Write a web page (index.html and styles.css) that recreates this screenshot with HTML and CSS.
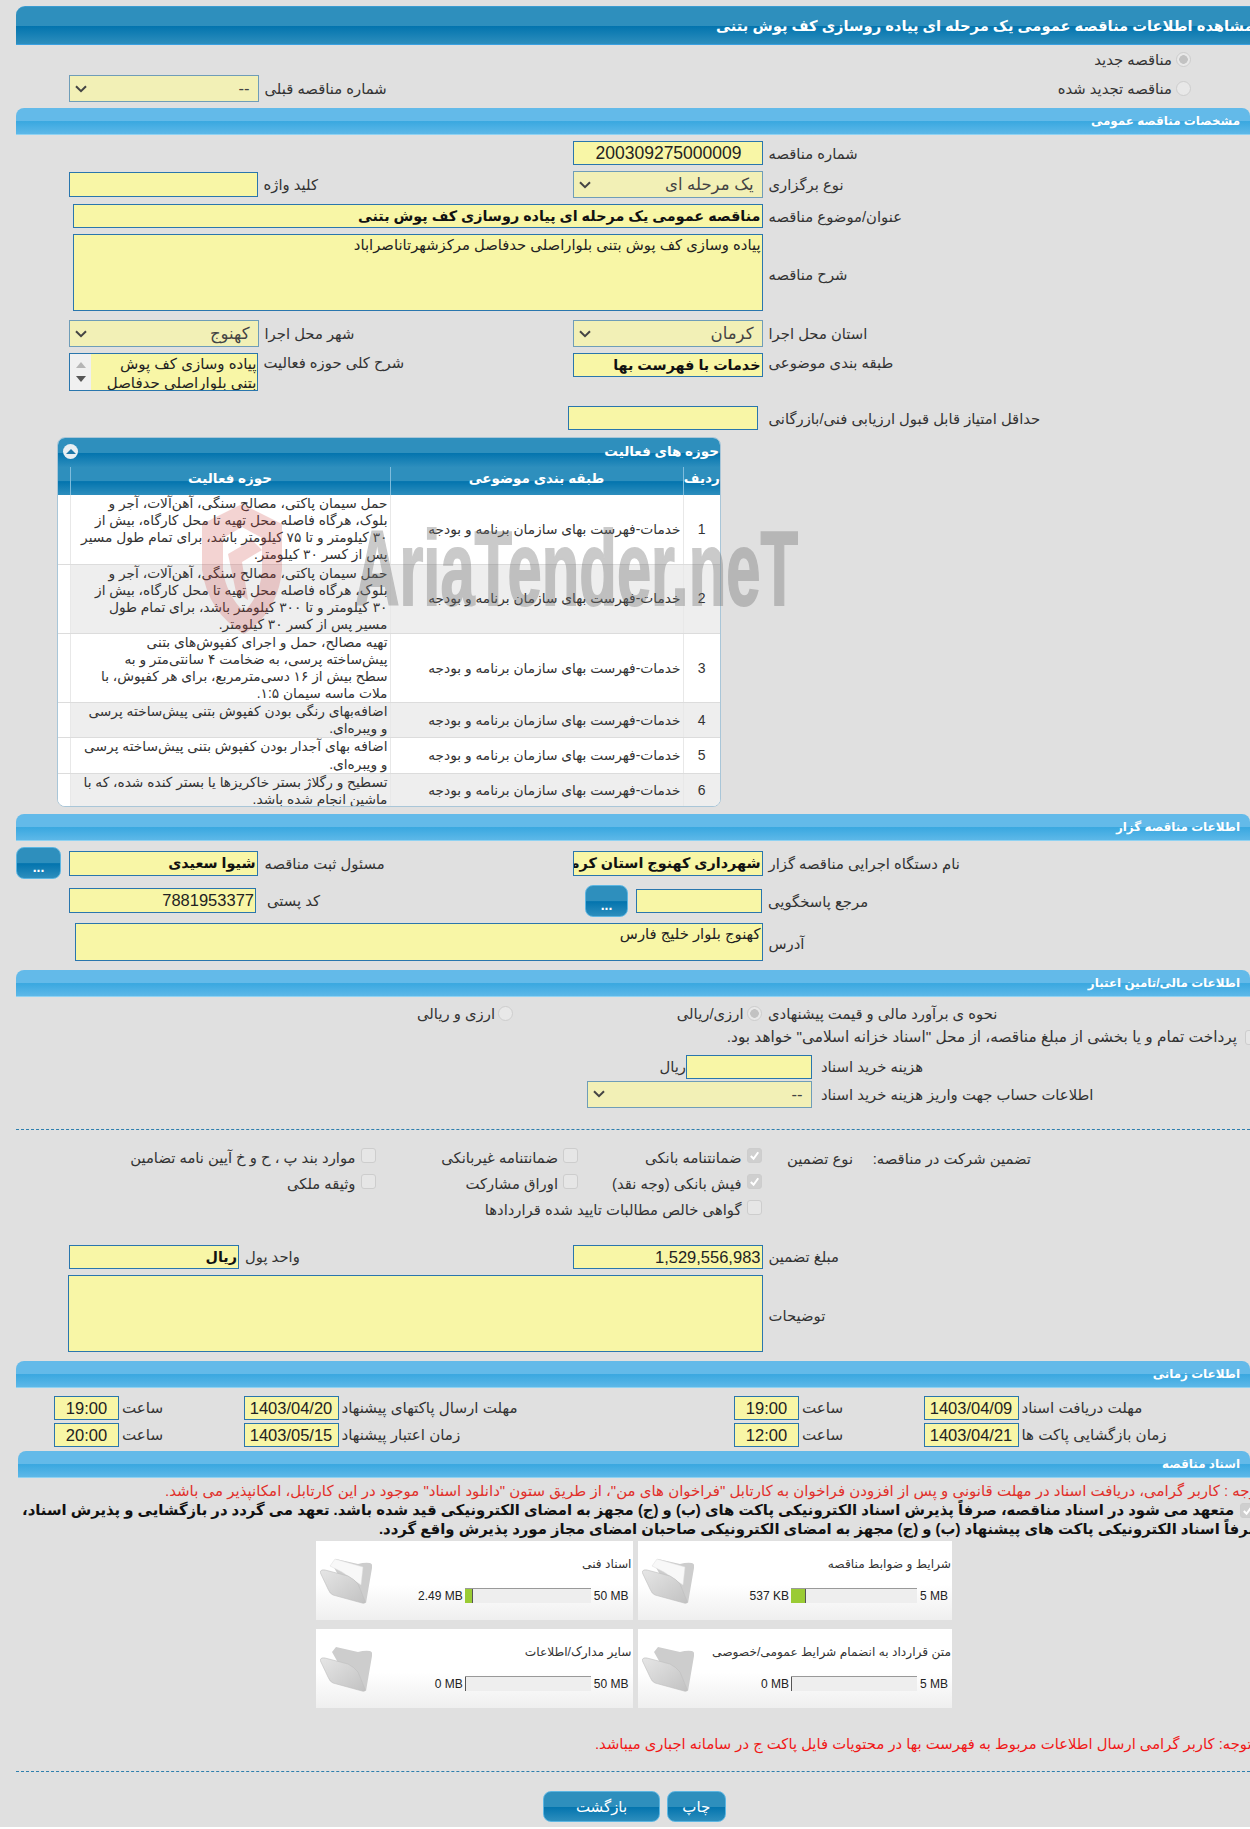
FILE: index.html
```html
<!DOCTYPE html>
<html lang="fa">
<head>
<meta charset="utf-8">
<title>مشاهده اطلاعات مناقصه</title>
<link rel="stylesheet" href="styles.css">
</head>
<body>
<svg class="defs" aria-hidden="true">
  <defs>
    <linearGradient id="fg" x1="0" y1="0" x2="1" y2="1"><stop offset="0" stop-color="#e6e6e6"/><stop offset="1" stop-color="#c2c2c2"/></linearGradient>
    <symbol id="folder-back" viewBox="0 0 52 46">
      <path d="M12 6 L16 1 L38 6 Q45 4 50 5 Q53 6 52 10 L46 45 L30 38 Z" fill="#cdcdcd"/>
    </symbol>
    <symbol id="folder-front" viewBox="0 0 52 46">
      <path d="M0 14 Q1 11 5 12 L28 18 Q34 21 38 26 L45 43 Q46 46 42 45 L13 37 Q10 36 8 31 Z" fill="url(#fg)" stroke="#bdbdbd" stroke-width=".6"/>
    </symbol>
    <symbol id="folder-paper" viewBox="0 0 52 46">
      <path d="M10 8 L15 1 L43 9 L41 27 L22 14 Z" fill="#f8f8f8" stroke="#dedede" stroke-width=".5"/>
    </symbol>
    <symbol id="chev" viewBox="0 0 12 8"><path d="M1 1.2 L6 6.2 L11 1.2" fill="none" stroke="#444" stroke-width="2"/></symbol>
    <symbol id="tick" viewBox="0 0 14 14"><path d="M3 7.5 L6 10.5 L11 3.5" fill="none" stroke="#fff" stroke-width="2.2"/></symbol>
  </defs>
</svg>

<div class="page">
  <h1 class="main-title"><span dir="rtl">مشاهده اطلاعات مناقصه عمومی یک مرحله ای پیاده روسازی کف پوش بتنی</span></h1>

  <div class="intro">
    <div class="field prev">
      <div class="sel w189"><svg class="chev"><use href="#chev"/></svg><span>--</span></div>
      <span class="lab">شماره مناقصه قبلی</span>
    </div>
    <div class="radios">
      <div class="opt"><span class="lab">مناقصه جدید</span><span class="radio on"></span></div>
      <div class="opt"><span class="lab">مناقصه تجدید شده</span><span class="radio"></span></div>
    </div>
  </div>

  <h2 class="sec"><span dir="rtl">مشخصات مناقصه عمومی</span></h2>

  <div class="form">
    <div class="row">
      <div></div>
      <div class="field"><div class="inp w189 num big">200309275000009</div><span class="lab">شماره مناقصه</span></div>
    </div>
    <div class="row center">
      <div class="field"><div class="inp w188 h25"></div><span class="lab">کلید واژه</span></div>
      <div class="field"><div class="sel w189"><svg class="chev"><use href="#chev"/></svg><span>یک مرحله ای</span></div><span class="lab">نوع برگزاری</span></div>
    </div>
    <div class="row">
      <div class="field wide"><div class="inp w689 strong">مناقصه عمومی یک مرحله ای پیاده روسازی کف پوش بتنی</div><span class="lab">عنوان/موضوع مناقصه</span></div>
    </div>
    <div class="row">
      <div class="field wide"><div class="inp w689 area">پیاده وسازی کف پوش بتنی بلواراصلی حدفاصل مرکزشهرتاناصراباد</div><span class="lab">شرح مناقصه</span></div>
    </div>
    <div class="row gap-9">
      <div class="field"><div class="sel w189"><svg class="chev"><use href="#chev"/></svg><span>کهنوج</span></div><span class="lab">شهر محل اجرا</span></div>
      <div class="field"><div class="sel w189"><svg class="chev"><use href="#chev"/></svg><span>کرمان</span></div><span class="lab">استان محل اجرا</span></div>
    </div>
    <div class="row">
      <div class="field top">
        <div class="list w188">
          <div class="scroll"><i class="up"></i><i class="down"></i></div>
          <div class="list-text">پیاده وسازی کف پوش<br>بتنی بلواراصلی حدفاصل</div>
        </div>
        <span class="lab">شرح کلی حوزه فعالیت</span>
      </div>
      <div class="field top"><div class="inp w189 strong">خدمات با فهرست بها</div><span class="lab">طبقه بندی موضوعی</span></div>
    </div>
    <div class="row gap-15">
      <div></div>
      <div class="field score"><div class="inp w189"></div><span class="lab">حداقل امتیاز قابل قبول ارزیابی فنی/بازرگانی</span></div>
    </div>

    <section class="card">
      <div class="card-title">
        <span class="collapse"><i></i></span>
        <span dir="rtl">حوزه های فعالیت</span>
      </div>
      <table class="grid" dir="rtl">
        <thead>
          <tr><th class="c-n">ردیف</th><th class="c-c">طبقه بندی موضوعی</th><th class="c-a">حوزه فعالیت</th><th class="c-e"></th></tr>
        </thead>
        <tbody>
          <tr class="r4"><td class="c-n">1</td><td class="c-c">خدمات-فهرست بهای سازمان برنامه و بودجه</td><td class="c-a">حمل سیمان پاکتی، مصالح سنگی، آهن‌آلات، آجر و<br>بلوک، هرگاه فاصله محل تهیه تا محل کارگاه، بیش از<br>۳۰ کیلومتر و تا ۷۵ کیلومتر باشد، برای تمام طول مسیر<br>پس از کسر ۳۰ کیلومتر.</td><td class="c-e"></td></tr>
          <tr class="r4 alt"><td class="c-n">2</td><td class="c-c">خدمات-فهرست بهای سازمان برنامه و بودجه</td><td class="c-a">حمل سیمان پاکتی، مصالح سنگی، آهن‌آلات، آجر و<br>بلوک، هرگاه فاصله محل تهیه تا محل کارگاه، بیش از<br>۳۰ کیلومتر و تا ۳۰۰ کیلومتر باشد، برای تمام طول<br>مسیر پس از کسر ۳۰ کیلومتر.</td><td class="c-e"></td></tr>
          <tr class="r4"><td class="c-n">3</td><td class="c-c">خدمات-فهرست بهای سازمان برنامه و بودجه</td><td class="c-a">تهیه مصالح، حمل و اجرای کفپوش‌های بتنی<br>پیش‌ساخته پرسی، به ضخامت ۴ سانتی‌متر و به<br>سطح بیش از ۱۶ دسی‌مترمربع، برای هر کفپوش، با<br>ملات ماسه سیمان ۱:۵.</td><td class="c-e"></td></tr>
          <tr class="r2 alt"><td class="c-n">4</td><td class="c-c">خدمات-فهرست بهای سازمان برنامه و بودجه</td><td class="c-a">اضافه‌بهای رنگی بودن کفپوش بتنی پیش‌ساخته پرسی<br>و ویبره‌ای.</td><td class="c-e"></td></tr>
          <tr class="r2"><td class="c-n">5</td><td class="c-c">خدمات-فهرست بهای سازمان برنامه و بودجه</td><td class="c-a">اضافه بهای آجدار بودن کفپوش بتنی پیش‌ساخته پرسی<br>و ویبره‌ای.</td><td class="c-e"></td></tr>
          <tr class="r2 alt"><td class="c-n">6</td><td class="c-c">خدمات-فهرست بهای سازمان برنامه و بودجه</td><td class="c-a">تسطیح و رگلاژ بستر خاکریزها یا بستر کنده شده، که با<br>ماشین انجام شده باشد.</td><td class="c-e"></td></tr>
        </tbody>
      </table>
    </section>
  </div>

  <h2 class="sec"><span dir="rtl">اطلاعات مناقصه گزار</span></h2>

  <div class="form">
    <div class="row three">
      <button class="btn dots" type="button">...</button>
      <div class="field"><div class="inp w188 h25 strong">شیوا سعیدی</div><span class="lab gap-lab">مسئول ثبت مناقصه</span></div>
      <div class="field"><div class="inp w189 h25 strong">شهرداری کهنوج استان کرمان</div><span class="lab">نام دستگاه اجرایی مناقصه گزار</span></div>
    </div>
    <div class="row top-align">
      <div class="field postal"><div class="inp w186 h25 num">7881953377</div><span class="lab">کد پستی</span></div>
      <div class="field ref">
        <button class="btn dots" type="button">...</button>
        <div class="inp w126"></div>
        <span class="lab">مرجع پاسخگویی</span>
      </div>
    </div>
    <div class="row">
      <div class="field wide addr"><div class="inp w688 addr-box">کهنوج بلوار خلیج فارس</div><span class="lab">آدرس</span></div>
    </div>
  </div>

  <h2 class="sec gap-sec"><span dir="rtl">اطلاعات مالی/تامین اعتبار</span></h2>

  <div class="finance">
    <div class="est">
      <div class="opt"><span class="lab">ارزی و ریالی</span><span class="radio"></span></div>
      <div class="opt"><span class="lab">ارزی/ریالی</span><span class="radio on"></span></div>
      <span class="lab">نحوه ی برآورد مالی و قیمت پیشنهادی</span>
    </div>
    <div class="treasury">
      <span class="lab" dir="rtl">پرداخت تمام و یا بخشی از مبلغ مناقصه، از محل "اسناد خزانه اسلامی" خواهد بود.</span>
      <span class="cb"></span>
    </div>
    <div class="fee">
      <span class="lab unit">ریال</span>
      <div class="inp w126"></div>
      <span class="lab">هزینه خرید اسناد</span>
    </div>
    <div class="bank">
      <div class="sel w224"><svg class="chev"><use href="#chev"/></svg><span>--</span></div>
      <span class="lab">اطلاعات حساب جهت واریز هزینه خرید اسناد</span>
    </div>
  </div>

  <div class="dash first-dash"></div>

  <div class="guarantee" dir="rtl">
    <span class="lab">تضمین شرکت در مناقصه:</span>
    <span class="lab">نوع تضمین</span>
    <div class="chk"><span class="cb on"><svg><use href="#tick"/></svg></span><span class="lab">ضمانتنامه بانکی</span></div>
    <div class="chk"><span class="cb"></span><span class="lab">ضمانتنامه غیربانکی</span></div>
    <div class="chk"><span class="cb"></span><span class="lab">موارد بند پ ، ح و خ آیین نامه تضامین</span></div>
    <div class="chk c3"><span class="cb on"><svg><use href="#tick"/></svg></span><span class="lab">فیش بانکی (وجه نقد)</span></div>
    <div class="chk"><span class="cb"></span><span class="lab">اوراق مشارکت</span></div>
    <div class="chk"><span class="cb"></span><span class="lab">وثیقه ملکی</span></div>
    <div class="chk c3 wide-chk"><span class="cb"></span><span class="lab">گواهی خالص مطالبات تایید شده قراردادها</span></div>
  </div>

  <div class="form amount">
    <div class="row">
      <div class="field"><div class="inp w170 strong">ریال</div><span class="lab">واحد پول</span></div>
      <div class="field"><div class="inp w189 num">1,529,556,983</div><span class="lab">مبلغ تضمین</span></div>
    </div>
    <div class="row">
      <div class="field desc"><div class="inp w694 area"></div><span class="lab">توضیحات</span></div>
    </div>
  </div>

  <h2 class="sec gap-sec"><span dir="rtl">اطلاعات زمانی</span></h2>

  <div class="dates">
    <div class="field"><div class="inp time">19:00</div><span class="lab">ساعت</span></div>
    <div class="field"><div class="inp date">1403/04/20</div><span class="lab">مهلت ارسال پاکتهای پیشنهاد</span></div>
    <div class="field"><div class="inp time">19:00</div><span class="lab">ساعت</span></div>
    <div class="field"><div class="inp date">1403/04/09</div><span class="lab">مهلت دریافت اسناد</span></div>
    <div class="field"><div class="inp time">20:00</div><span class="lab">ساعت</span></div>
    <div class="field"><div class="inp date">1403/05/15</div><span class="lab">زمان اعتبار پیشنهاد</span></div>
    <div class="field"><div class="inp time">12:00</div><span class="lab">ساعت</span></div>
    <div class="field"><div class="inp date">1403/04/21</div><span class="lab">زمان بازگشایی پاکت ها</span></div>
  </div>

  <h2 class="sec docs-sec"><span dir="rtl">اسناد مناقصه</span></h2>

  <p class="note red-1"><span dir="rtl">توجه : کاربر گرامی، دریافت اسناد در مهلت قانونی و پس از افزودن فراخوان به کارتابل "فراخوان های من"، از طریق ستون "دانلود اسناد" موجود در این کارتابل، امکانپذیر می باشد.</span></p>
  <div class="pledge">
    <span dir="rtl">متعهد می شود در اسناد مناقصه، صرفاً پذیرش اسناد الکترونیکی پاکت های (ب) و (ج) مجهز به امضای الکترونیکی قید شده باشد. تعهد می گردد در بازگشایی و پذیرش اسناد،</span>
    <span class="cb on"><svg><use href="#tick"/></svg></span>
  </div>
  <p class="note pledge-2"><span dir="rtl">صرفاً اسناد الکترونیکی پاکت های پیشنهاد (ب) و (ج) مجهز به امضای الکترونیکی صاحبان امضای مجاز مورد پذیرش واقع گردد.</span></p>

  <div class="files">
    <div class="file">
      <svg class="folder"><use href="#folder-back"/><use href="#folder-paper"/><use href="#folder-front"/></svg>
      <div class="file-body">
        <div class="file-title" dir="rtl">اسناد فنی</div>
        <div class="meter"><span class="val">2.49 MB</span><div class="bar"><i class="fill f-7"></i></div><span class="max">50 MB</span></div>
      </div>
    </div>
    <div class="file">
      <svg class="folder"><use href="#folder-back"/><use href="#folder-paper"/><use href="#folder-front"/></svg>
      <div class="file-body">
        <div class="file-title" dir="rtl">شرایط و ضوابط مناقصه</div>
        <div class="meter"><span class="val">537 KB</span><div class="bar"><i class="fill f-14"></i></div><span class="max">5 MB</span></div>
      </div>
    </div>
    <div class="file">
      <svg class="folder"><use href="#folder-back"/><use href="#folder-front"/></svg>
      <div class="file-body">
        <div class="file-title" dir="rtl">سایر مدارک/اطلاعات</div>
        <div class="meter"><span class="val">0 MB</span><div class="bar"><i class="fill f-0"></i></div><span class="max">50 MB</span></div>
      </div>
    </div>
    <div class="file">
      <svg class="folder"><use href="#folder-back"/><use href="#folder-front"/></svg>
      <div class="file-body">
        <div class="file-title" dir="rtl">متن قرارداد به انضمام شرایط عمومی/خصوصی</div>
        <div class="meter"><span class="val">0 MB</span><div class="bar"><i class="fill f-0"></i></div><span class="max">5 MB</span></div>
      </div>
    </div>
  </div>

  <p class="note red-2"><span dir="rtl">توجه: کاربر گرامی ارسال اطلاعات مربوط به فهرست بها در محتویات فایل پاکت ج در سامانه اجباری میباشد.</span></p>

  <div class="dash last-dash"></div>

  <div class="actions">
    <button class="btn wide-btn" type="button">بازگشت</button>
    <button class="btn print-btn" type="button">چاپ</button>
  </div>

  <div class="watermark" aria-hidden="true">
    <svg class="wm-shield" viewBox="0 0 82 136"><path d="M2 24 L42 4 L82 24 L82 70 Q78 112 44 134 Q8 112 2 70 Z M23 38 L23 70 Q26 94 44 112 Q60 96 62 72 L62 38 L42 27 Z M28 54 L52 40 L62 50 L42 62 L48 100 L36 92 Z" fill="#cc3a36" fill-rule="evenodd"/></svg>
    <span class="wm-text">AriaTender.neT</span>
  </div>
</div>
</body>
</html>
```
FILE: styles.css
```css
* { box-sizing: border-box; }
html, body { margin: 0; padding: 0; background: #fff; }
body { font-family: "Liberation Sans", "DejaVu Sans", sans-serif; color: #333; }
.defs { position: absolute; width: 0; height: 0; }

.page {
  position: relative;
  width: 1250px;
  height: 1827px;
  padding: 6px 0 0 16px;
  overflow: hidden;
  background: #e0e0e0;
  font-size: 14.8px;
}

.main-title {
  height: 39px;
  margin: 0;
  padding: 0 0 0 700px;
  display: flex;
  align-items: center;
  border-radius: 9px 0 0 0;
  border-top: 1px solid #3b9bd0;
  border-bottom: 1px solid #3aa0e0;
  background: linear-gradient(#2e8fbd 0, #2e8fbd 50%, #0374ae 52%, #2d8ebd 100%);
  color: #fff;
  font-size: 14.7px;
  font-weight: bold;
  white-space: nowrap;
}

.sec {
  height: 27px;
  margin: 0;
  padding-right: 10px;
  display: flex;
  align-items: center;
  justify-content: flex-start;
  flex-direction: row-reverse;
  border-radius: 8px 8px 0 0;
  border-bottom: 1px solid #8fd2f2;
  background: linear-gradient(#63bae9 0, #63bae9 50%, #3aa8e0 52%, #5db8e8 100%);
  color: #fff;
  font-size: 11.9px;
  font-weight: bold;
  white-space: nowrap;
}
.gap-sec { margin-top: 9px; }
.docs-sec { margin-top: 4px; margin-left: 2px; }

.intro {
  height: 63px;
  padding: 0 59px 0 53px;
  display: flex;
  justify-content: space-between;
}
.prev { margin-top: 30px; align-self: flex-start; }
.radios { display: flex; flex-direction: column; }
.opt { height: 29px; display: flex; align-items: center; justify-content: flex-end; gap: 4px; }
.lab { white-space: nowrap; direction: rtl; color: #333; }

.radio {
  width: 15px;
  height: 15px;
  border: 1px solid #cdcdcd;
  border-radius: 50%;
  background: #e8e8e8;
  flex: none;
}
.radio.on { background: radial-gradient(circle, #c2c2c2 0 4px, #e8e8e8 4.6px); }

.cb {
  display: inline-block;
  width: 15px;
  height: 15px;
  border: 1px solid #cdcdcd;
  border-radius: 3px;
  background: #e6e6e6;
  flex: none;
}
.cb svg { display: block; width: 13px; height: 13px; }
.cb.on { background: #cfcfcf; }

.form { padding-top: 6px; display: flex; flex-direction: column; gap: 6px; }
.row {
  display: grid;
  grid-template-columns: 504px 1fr;
  padding-left: 53px;
  align-items: start;
}
.row.center { align-items: center; }
.gap-9 { margin-top: 3px; }
.gap-15 { margin-top: 9px; }
.three { grid-template-columns: 53px 504px 1fr; padding-left: 0; align-items: center; }
.top-align { align-items: start; }

.field { display: flex; align-items: center; gap: 6px; }
.field.top { align-items: flex-start; }
.field.top .lab { margin-top: 1px; }
.wide { grid-column: 1 / -1; margin-left: 4px; }
.postal { margin-top: 3px; gap: 11px; }
.ref { margin-left: 12px; }
.score { margin-left: -5px; gap: 11px; }
.gap-lab { margin-left: 1px; }
.addr { margin-left: 5.5px; }
.desc { grid-column: 1 / -1; margin-left: -1px; }
.area + .lab, .addr-box + .lab { margin-top: 4px; }

.inp {
  height: 24px;
  padding: 0 1px;
  border: 1px solid #2a76ad;
  background: #f8f6a6;
  color: #222;
  direction: rtl;
  text-align: right;
  line-height: 22px;
  white-space: nowrap;
  overflow: hidden;
  flex: none;
}
.h25 { height: 25px; }
.strong { font-size: 14.35px; font-weight: bold; color: #111; line-height: 23px; }
.num { font-size: 16.5px; direction: ltr; }
.big { font-size: 17.5px; padding-right: 20px; }
.area { height: 77px; white-space: normal; line-height: 18px; padding-top: 1px; }
.addr-box { height: 37.5px; white-space: normal; line-height: 18px; padding-top: 1px; }
.w126 { width: 126px; }
.w170 { width: 170px; }
.w186 { width: 187px; }
.w188 { width: 188.5px; }
.w189 { width: 189.5px; }
.w224 { width: 224.5px; }
.w688 { width: 688px; }
.w689 { width: 689.5px; }
.w694 { width: 694.5px; }

.sel {
  height: 27px;
  padding: 0 8px 0 5px;
  display: flex;
  align-items: center;
  justify-content: space-between;
  border: 1px solid #6f9db8;
  background: #f2f0b6;
  color: #444;
  flex: none;
  direction: ltr;
}
.sel span { direction: rtl; font-size: 16.5px; }
.chev { width: 12px; height: 8px; }

.list {
  height: 38px;
  display: flex;
  border: 1px solid #2a76ad;
  background: #f8f6a6;
  overflow: hidden;
  flex: none;
}
.scroll {
  width: 21px;
  display: flex;
  flex-direction: column;
  align-items: center;
  justify-content: space-around;
  padding: 4px 0;
  background: #f0f0f0;
  flex: none;
}
.up { border: 5px solid transparent; border-top: 0; border-bottom: 6px solid #b5b5b5; }
.down { border: 5px solid transparent; border-bottom: 0; border-top: 6px solid #555; }
.list-text { flex: 1; direction: rtl; text-align: right; font-size: 15px; line-height: 19px; white-space: nowrap; color: #222; }

.card {
  margin: 1px 0 7px 41px;
  width: 664px;
  height: 370px;
  background: #fff;
  border: 1px solid #a9c6d8;
  border-radius: 8px;
  overflow: hidden;
}
.card-title {
  height: 29px;
  padding: 0 1px 3px 5px;
  display: flex;
  align-items: center;
  justify-content: space-between;
  background: linear-gradient(#2e8fbd 0, #2e8fbd 50%, #0374ae 52%, #2d8ebd 100%);
  color: #fff;
  font-size: 13.5px;
  font-weight: bold;
}
.collapse {
  width: 15px;
  height: 15px;
  display: flex;
  align-items: center;
  justify-content: center;
  border-radius: 50%;
  background: #e8eff3;
}
.collapse i { border: 5px solid transparent; border-top: 0; border-bottom: 5px solid #1f78a8; }

.grid { width: 100%; border-collapse: collapse; table-layout: fixed; }
.grid th {
  height: 28px;
  padding: 0 0 6px;
  border-left: 1px solid #7fbcdc;
  background: linear-gradient(#2e8fbd 0, #2e8fbd 50%, #0374ae 52%, #2d8ebd 100%);
  color: #fff;
  font-size: 13.5px;
  font-weight: bold;
}
.grid th.c-e { border-left: 0; }
.grid td { padding: 0 2px; border-bottom: 1px solid #dcdcdc; color: #333; font-size: 13.75px; line-height: 17.1px; }
.grid tr:last-child td { border-bottom: 0; }
.grid td.c-n { text-align: center; font-size: 14px; border-left: 1px solid #e8e8e8; }
.grid td.c-c { text-align: right; white-space: nowrap; border-left: 1px solid #e8e8e8; }
.grid td.c-a { text-align: right; white-space: nowrap; border-left: 1px solid #e8e8e8; }
.grid td.c-e { padding: 0; }
.c-n { width: 37px; }
.c-c { width: 293px; }
.c-a { width: 320px; }
.c-e { width: auto; }
.r4 td { height: 69px; }
.r2 td { height: 35px; }
.alt td { background: #eee; }
.alt td.c-e { background: #fff; }

.dots { padding-bottom: 0; }
.btn {
  width: 45px;
  height: 32px;
  padding: 8px 0 0;
  border: 1px solid #5db6e2;
  border-radius: 8px;
  background: linear-gradient(#2e8fbd 0, #2e8fbd 50%, #0374ae 52%, #2d8ebd 100%);
  color: #fff;
  font: bold 14px "Liberation Sans", "DejaVu Sans", sans-serif;
}
.ref .btn { width: 43px; flex: none; margin-right: 2px; }
.ref { gap: 6px; }

.finance { padding-top: 8px; }
.est { height: 17px; padding-left: 404px; display: flex; align-items: center; }
.est .opt { height: 17px; gap: 3px; justify-content: flex-end; }
.est .opt:nth-child(1) { width: 93px; margin-right: 164px; }
.est .opt:nth-child(2) { width: 84.5px; margin-right: 6.5px; }
.treasury { height: 17px; margin-top: 7px; padding-left: 709px; display: flex; align-items: center; gap: 8px; }
.treasury .lab { width: 512px; text-align: right; flex: none; font-size: 15.35px; }
.fee { margin-top: 9px; padding-left: 646px; display: flex; align-items: center; }
.fee .unit { width: 24px; }
.fee .w126 { margin-right: 9px; }
.bank { margin-top: 2px; padding-left: 571px; display: flex; align-items: center; gap: 9.5px; }

.dash { height: 0; border-top: 1px dashed #2e7fae; }
.first-dash { margin-top: 21px; }

.guarantee {
  margin-top: 18px;
  padding-right: 219px;
  display: grid;
  grid-template-columns: 178px 91.5px 183.5px 202.5px 1fr;
  grid-auto-rows: 26px;
}
.chk { display: flex; align-items: flex-start; gap: 5px; }
.chk .lab { margin-top: 1px; }
.guarantee > .lab { margin-top: 2px; }
.c3 { grid-column: 3; }
.wide-chk { grid-column: 3 / span 3; }

.amount { padding-top: 19px; }
.dates {
  padding: 8px 0 0 38px;
  display: grid;
  grid-template-columns: 189.5px 490.5px 189.5px 1fr;
  row-gap: 2.5px;
}
.dates .field { gap: 3px; }
.dates .lab { font-size: 15.1px; }
.dates .inp { font-size: 16.5px; height: 24.5px; direction: ltr; text-align: center; }
.time { width: 65px; }
.date { width: 95px; }

.note { margin: 0; white-space: nowrap; }
.red-1 { margin-top: 4px; padding-left: 149px; color: #e0302a; font-size: 15px; height: 18px; line-height: 18px; }
.pledge {
  height: 20px;
  margin-top: 0;
  padding-left: 6px;
  display: flex;
  align-items: center;
  gap: 6px;
  color: #111;
  font-weight: bold;
  font-size: 14.85px;
  white-space: nowrap;
}
.pledge-2 { height: 18px; padding-left: 363px; color: #111; font-weight: bold; font-size: 14.85px; line-height: 18px; }

.files {
  margin: 3px 0 0 300px;
  width: 636px;
  display: grid;
  grid-template-columns: 316.5px 314.5px;
  column-gap: 5px;
  row-gap: 9px;
}
.file {
  height: 79px;
  padding: 4px 4px 4px 4px;
  display: flex;
  background: linear-gradient(#fff 55%, #efefef 100%);
}
.folder { width: 52px; height: 46px; margin-top: 13px; flex: none; }
.file-body { flex: 1; }
.file-title { margin: 12px -3px 0 0; height: 17px; font-size: 12.2px; color: #333; white-space: nowrap; }
.meter { margin-top: 14px; height: 15px; display: flex; align-items: center; justify-content: flex-end; font-size: 12px; color: #222; white-space: nowrap; }
.bar { width: 126px; height: 15px; display: flex; background: #eee; border-top: 1px solid #999; margin: 0 3px 0 2px; flex: none; }
.fill { height: 100%; background: #9acb34; border-right: 1px solid #555; display: block; }
.f-0 { width: 1px; }
.f-7 { width: 8px; }
.f-14 { width: 15px; }
.max { min-width: 28px; text-align: right; }

.red-2 { margin-top: 27px; padding-left: 579px; color: #f01818; font-size: 14.8px; height: 18px; line-height: 18px; }
.last-dash { margin-top: 18px; }
.actions { margin-top: 19px; padding-left: 527px; display: flex; gap: 7px; }
.actions .btn { height: 31px; padding: 0; font-weight: normal; font-size: 15px; }
.wide-btn { width: 117px !important; }
.print-btn { width: 58.5px !important; }

.watermark {
  position: absolute;
  left: 198px;
  top: 500px;
  width: 620px;
  height: 140px;
  pointer-events: none;
}
.wm-shield { position: absolute; left: 2px; top: 0; width: 82px; height: 136px; opacity: .22; }
.wm-text {
  position: absolute;
  left: 157px;
  top: 15px;
  font: bold 106px/1 "Liberation Sans", sans-serif;
  color: #6e6e6e;
  -webkit-text-stroke: 2px #6e6e6e;
  opacity: .36;
  white-space: nowrap;
  transform: scaleX(.58);
  transform-origin: left top;
}
```
